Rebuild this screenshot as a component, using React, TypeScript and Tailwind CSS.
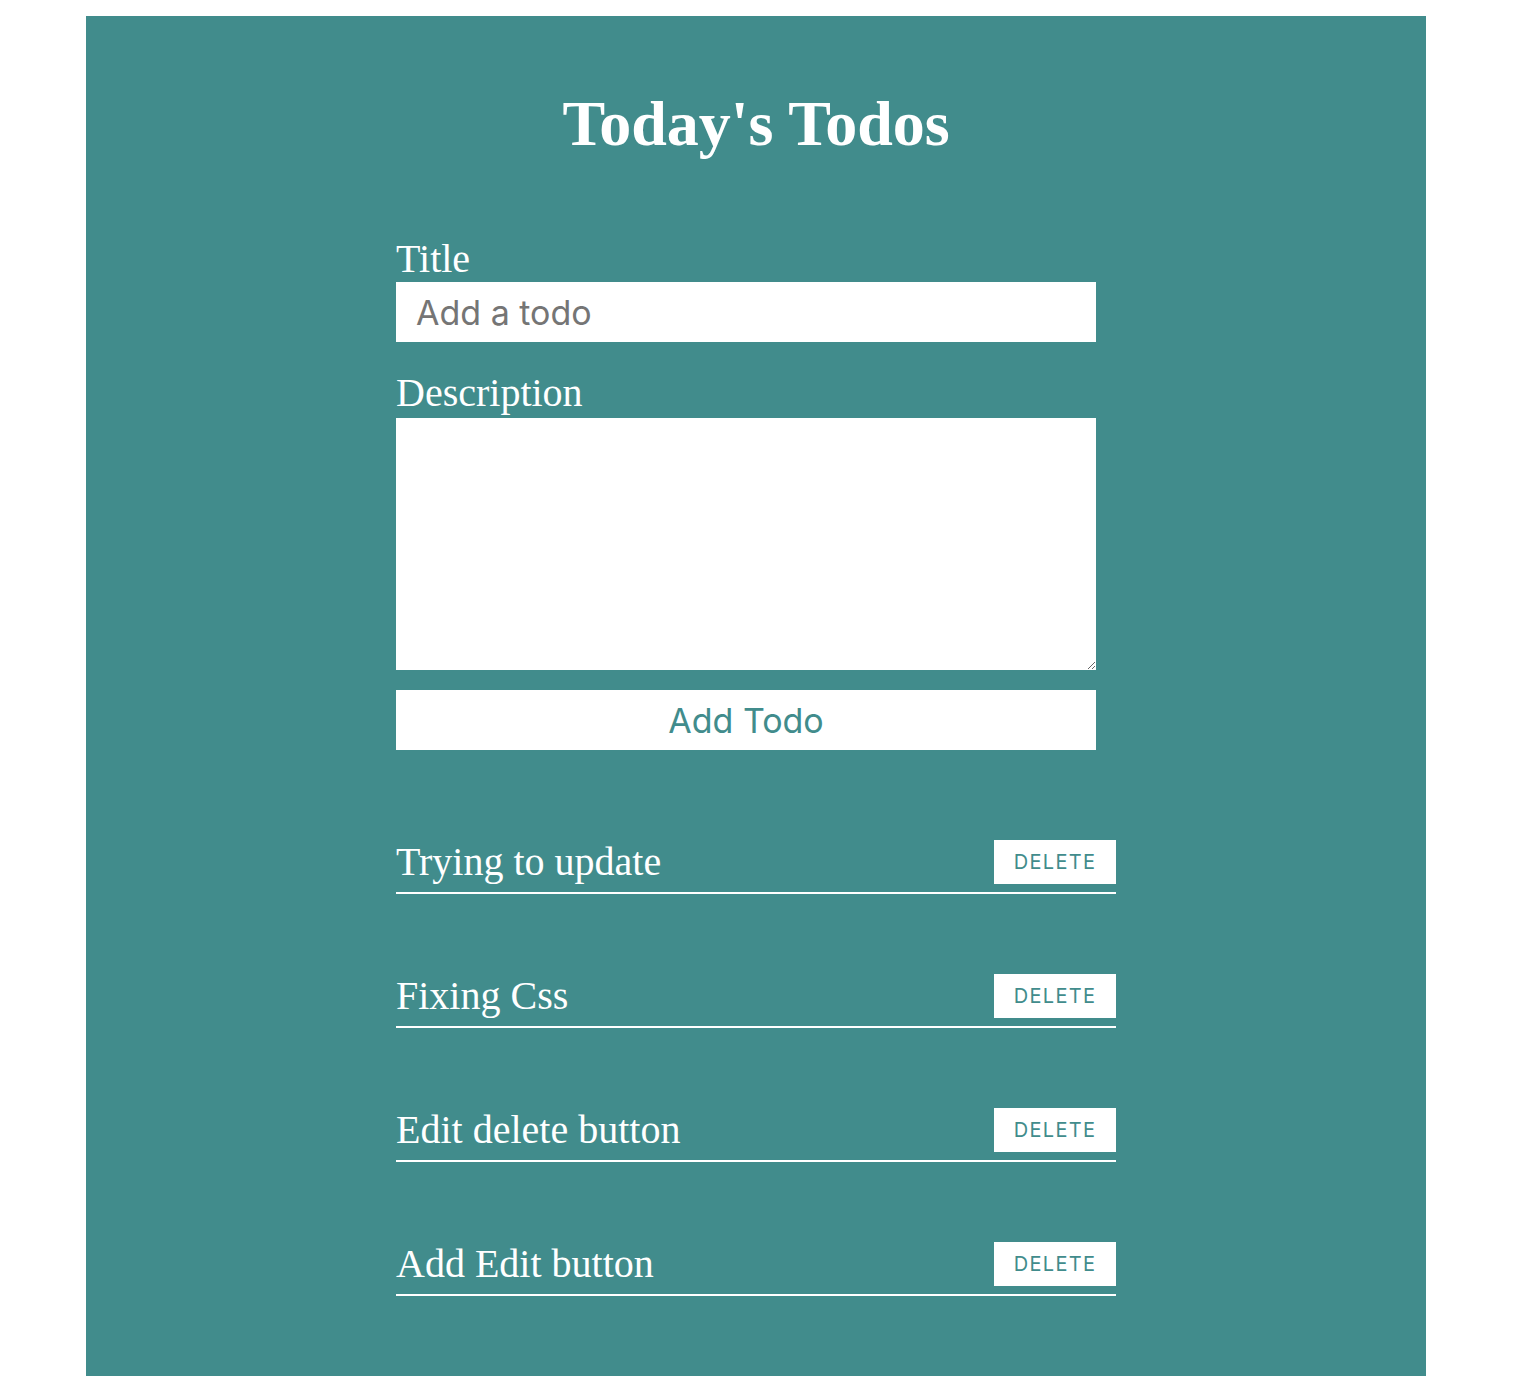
import React from "react";

const todos = ["Trying to update", "Fixing Css", "Edit delete button", "Add Edit button"];

export default function App() {
  const serif = { fontFamily: '"Liberation Serif", "Times New Roman", serif' };
  return (
    <div className="bg-white min-h-[1394px] pt-4 pb-[18px]">
      <div className="ml-[86px] w-[1340px] bg-[#418c8c] pt-[72px] pb-[80px]" style={serif}>
        <h1 className="text-center text-white font-bold text-[64px] leading-[72px]">Today's Todos</h1>
        <div className="w-[720px] mx-auto mt-[76px]">
          <form className="w-[700px] flex flex-col" onSubmit={(e) => e.preventDefault()}>
            <label className="block text-white text-[40px] leading-[46px]">Title</label>
            <input
              type="text"
              placeholder="Add a todo"
              className="h-[60px] w-full bg-white px-5 text-[34px] text-[#222] placeholder:text-[#757575] outline-none font-['Inter',sans-serif]"
            />
            <label className="block text-white text-[40px] leading-[46px] mt-[28px]">Description</label>
            <textarea className="mt-[2px] h-[252px] w-full bg-white outline-none block" />
            <button
              type="submit"
              className="mt-5 h-[60px] w-full bg-white text-[#418c8c] text-[34px] font-['Inter',sans-serif]"
            >
              Add Todo
            </button>
          </form>
          <div className="mt-[89px] flex flex-col gap-[79px]">
            {todos.map((t) => (
              <div key={t} className="flex items-center justify-between border-b-2 border-white pb-[7px]">
                <span className="text-white text-[40px] leading-[46px]">{t}</span>
                <button className="w-[122px] h-[44px] bg-white text-[#418c8c] text-[20px] tracking-[1.3px] font-['Inter',sans-serif]">
                  DELETE
                </button>
              </div>
            ))}
          </div>
        </div>
      </div>
    </div>
  );
}
